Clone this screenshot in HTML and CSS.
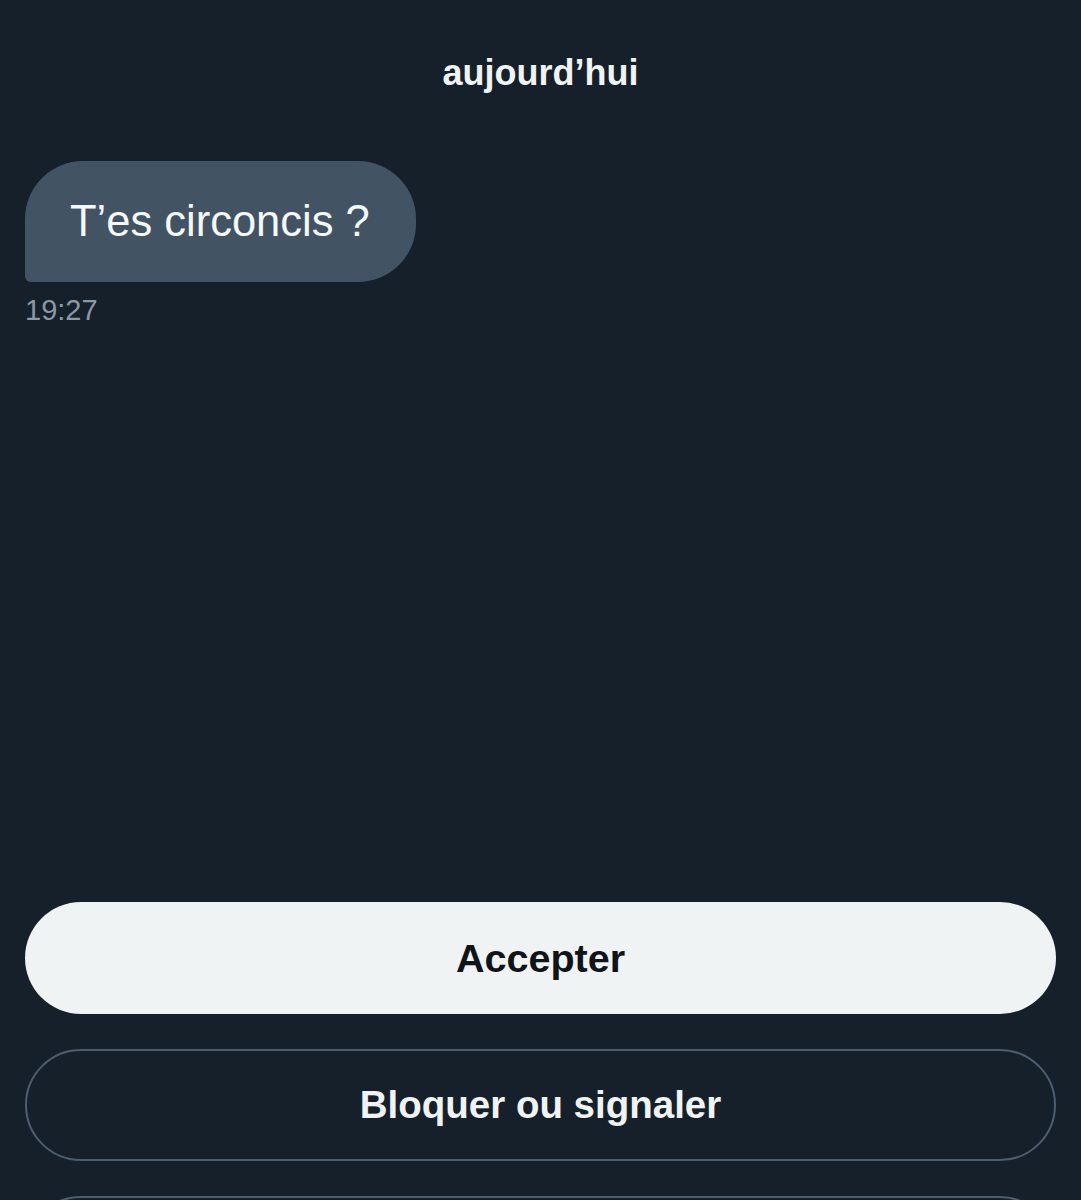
FILE: index.html
```html
<!DOCTYPE html>
<html lang="fr">
<head>
    <meta charset="UTF-8">
    <meta name="viewport" content="width=device-width, initial-scale=1.0">
    <title>Messages</title>
    <link rel="stylesheet" href="styles.css">
</head>
<body>

    <div class="thread">
        <div class="day">aujourd’hui</div>

        <div class="message">
            <div class="bubble">T’es circoncis ?</div>
            <div class="time">19:27</div>
        </div>
    </div>

    <div class="actions">
        <button class="btn btn-primary">Accepter</button>
        <button class="btn btn-outline">Bloquer ou signaler</button>
        <button class="btn btn-outline" aria-label="Supprimer"></button>
    </div>

</body>
</html>
```

FILE: styles.css
```css
/* General Styles */
body, html {
    margin: 0;
    padding: 0;
    font-family: "Liberation Sans", Arial, sans-serif;
    background-color: #16202a;
    color: #eff3f4;
}

/* Conversation */
.thread {
    min-height: 902px;
    padding: 52px 25px 0;
    box-sizing: border-box;
}

.day {
    text-align: center;
    font-size: 36px;
    line-height: 42px;
    font-weight: bold;
}

.message {
    margin-top: 67px;
}

.bubble {
    display: inline-block;
    background-color: #425363;
    color: #f5f8f9;
    font-size: 43.5px;
    line-height: 50px;
    padding: 35px 46px 36px 45px;
    border-radius: 58px 58px 58px 6px;
}

.time {
    margin-top: 11px;
    font-size: 29px;
    line-height: 34px;
    color: #8b98a5;
}

/* Buttons */
.actions {
    display: flex;
    flex-direction: column;
    gap: 35px;
    padding: 0 25px;
}

.btn {
    height: 112px;
    border-radius: 56px;
    font-family: "Liberation Sans", Arial, sans-serif;
    font-size: 38.5px;
    font-weight: bold;
    cursor: pointer;
    display: flex;
    align-items: center;
    justify-content: center;
    width: 100%;
}

.btn-primary {
    background-color: #eff3f4;
    color: #0f1419;
    border: none;
    font-size: 39.5px;
}

.btn-outline {
    background-color: transparent;
    color: #eff3f4;
    border: 2px solid #4e5e6e;
}
```
